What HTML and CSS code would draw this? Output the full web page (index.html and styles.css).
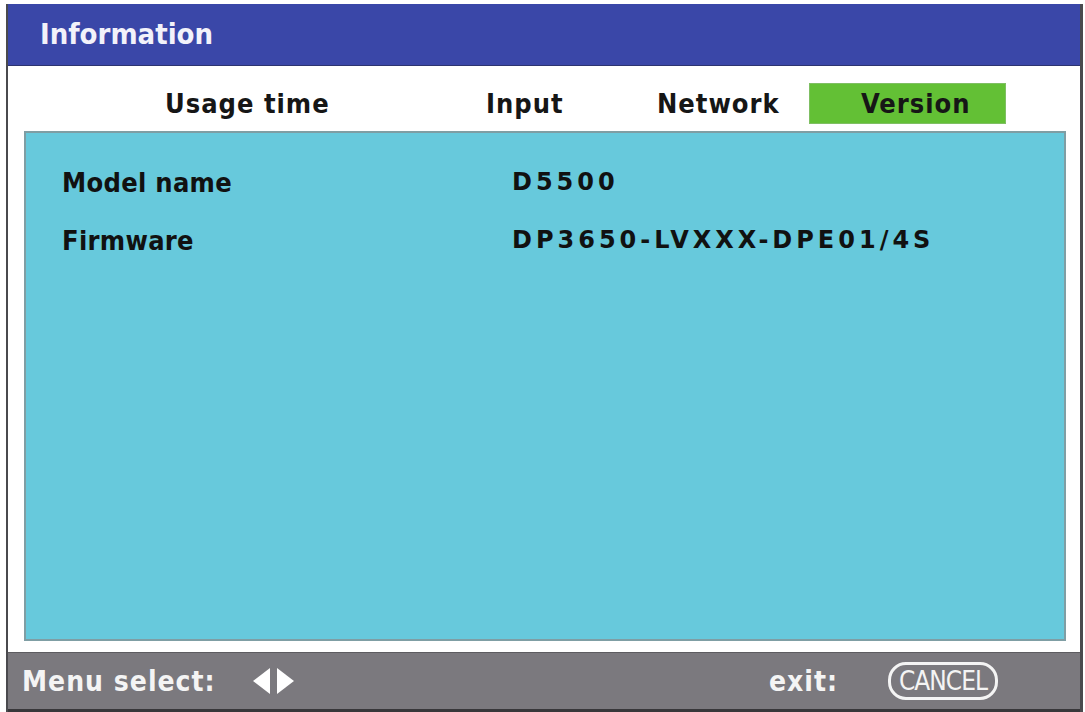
FILE: index.html
```html
<!DOCTYPE html>
<html>
<head>
  <title>Information</title>
  <link rel="stylesheet" href="styles.css">
</head>
<body>

<div class="window">
  <!-- Title bar -->
  <div class="titlebar">Information</div>

  <!-- Tabs -->
  <div class="tabs">
    <div class="tab tab-usage">Usage time</div>
    <div class="tab tab-input">Input</div>
    <div class="tab tab-network">Network</div>
    <div class="tab tab-version active">Version</div>
  </div>

  <!-- Info panel -->
  <div class="panel">
    <div class="row">
      <span class="label">Model name</span>
      <span class="value">D5500</span>
    </div>
    <div class="row">
      <span class="label">Firmware</span>
      <span class="value">DP3650-LVXXX-DPE01/4S</span>
    </div>
  </div>

  <!-- Footer -->
  <div class="footer">
    <span class="hint">Menu select:</span>
    <svg class="arrows" width="48" height="30" viewBox="0 0 48 30">
      <polygon points="20,2 20,28 3,15" fill="#fff"/>
      <polygon points="27,2 27,28 44,15" fill="#fff"/>
    </svg>
    <span class="exit">exit:</span>
    <span class="cancel">CANCEL</span>
  </div>
</div>

</body>
</html>
```

FILE: styles.css
```css
body {
  margin: 0;
  background-color: #fff;
  font-family: 'DejaVu Sans Condensed', 'DejaVu Sans', sans-serif;
  font-weight: bold;
}
.window {
  width: 1072px;
  margin: 4px 0 0 6px;
  border-left: 2px solid #4a4a4e;
  border-right: 3px solid #4a4a4e;
  background-color: #fff;
}
.titlebar {
  height: 61px;
  background-color: #3a47a8;
  color: #f2f2fa;
  font-size: 29px;
  line-height: 61px;
  padding-left: 32px;
  border-bottom: 1px solid #2d3470;
}
.tabs {
  display: flex;
  height: 65px;
  box-sizing: border-box;
  padding: 18px 0 0 157px;
  font-size: 27px;
  letter-spacing: 1px;
  color: #161616;
}
.tab {
  height: 39px;
  line-height: 39px;
}
.tab-usage { width: 321px; }
.tab-input { width: 171px; }
.tab-network { width: 153px; }
.tab-version {
  width: 144px;
  padding-left: 51px;
}
.tab.active {
  background-color: #63c035;
  box-shadow: 0 0 0 1px #7fbf63;
}
.panel {
  height: 510px;
  margin: 0 14px 0 16px;
  background-color: #67c9dc;
  border: 2px solid #7f9ea4;
  padding-top: 20px;
  box-sizing: border-box;
}
.row {
  display: flex;
  height: 58px;
  align-items: center;
  color: #111;
}
.label {
  width: 450px;
  padding-left: 36px;
  font-size: 27px;
  letter-spacing: 0.3px;
}
.value {
  font-family: 'DejaVu Sans', sans-serif;
  font-size: 24px;
  letter-spacing: 4px;
}
.footer {
  display: flex;
  align-items: center;
  height: 56px;
  margin-top: 11px;
  background-color: #7b797e;
  border-top: 1px solid #5d5c60;
  border-bottom: 4px solid #38373a;
  color: #f4f4f4;
  font-size: 28px;
  letter-spacing: 1px;
}
.hint {
  margin-left: 14px;
  width: 228px;
}
.exit {
  margin-left: 471px;
  width: 119px;
}
.cancel {
  font-weight: normal;
  font-size: 26px;
  border: 3px solid #f4f4f4;
  border-radius: 18px;
  padding: 0 8px;
  height: 32px;
  line-height: 32px;
  letter-spacing: -1px;
}
```
